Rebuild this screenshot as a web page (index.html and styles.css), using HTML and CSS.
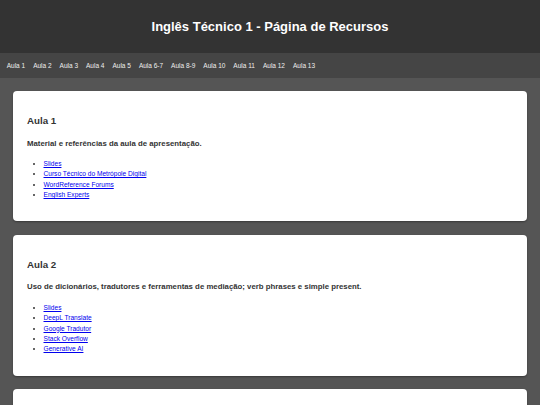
FILE: index.html
```html
<!DOCTYPE html>
<html lang="pt-BR">
<head>
<meta charset="utf-8">
<title>Inglês Técnico 1 - Página de Recursos</title>
<link rel="stylesheet" href="styles.css">
</head>
<body>
<header class="site-header">
  <h1 class="site-title">Inglês Técnico 1 - Página de Recursos</h1>
</header>
<nav class="site-nav">
  <a href="#aula1">Aula 1</a>
  <a href="#aula2">Aula 2</a>
  <a href="#aula3">Aula 3</a>
  <a href="#aula4">Aula 4</a>
  <a href="#aula5">Aula 5</a>
  <a href="#aula6-7">Aula 6-7</a>
  <a href="#aula8-9">Aula 8-9</a>
  <a href="#aula10">Aula 10</a>
  <a href="#aula11">Aula 11</a>
  <a href="#aula12">Aula 12</a>
  <a href="#aula13">Aula 13</a>
</nav>
<main class="content">
  <section class="card" id="aula1">
    <h2 class="card-title">Aula 1</h2>
    <p class="card-desc">Material e referências da aula de apresentação.</p>
    <ul class="card-links">
      <li><a href="#">Slides</a></li>
      <li><a href="#">Curso Técnico do Metrópole Digital</a></li>
      <li><a href="#">WordReference Forums</a></li>
      <li><a href="#">English Experts</a></li>
    </ul>
  </section>
  <section class="card" id="aula2">
    <h2 class="card-title">Aula 2</h2>
    <p class="card-desc">Uso de dicionários, tradutores e ferramentas de mediação; verb phrases e simple present.</p>
    <ul class="card-links">
      <li><a href="#">Slides</a></li>
      <li><a href="#">DeepL Translate</a></li>
      <li><a href="#">Google Tradutor</a></li>
      <li><a href="#">Stack Overflow</a></li>
      <li><a href="#">Generative AI</a></li>
    </ul>
  </section>
  <section class="card card-next" id="aula3"></section>
</main>
</body>
</html>
```
FILE: styles.css
```css
html, body {
  margin: 0;
  padding: 0;
}
body {
  background: #555555;
  font-family: "Liberation Sans", Arial, sans-serif;
  font-size: 6.5px;
  color: #333333;
}
.site-header {
  background: #333333;
  height: 53px;
  display: flex;
  align-items: center;
  justify-content: center;
}
.site-title {
  margin: 0;
  color: #ffffff;
  font-size: 13px;
  font-weight: bold;
  line-height: 15px;
}
.site-nav {
  background: #454545;
  height: 25px;
  display: flex;
  align-items: center;
  gap: 8px;
  padding: 0 6.7px;
}
.site-nav a {
  color: #eeeeee;
  text-decoration: none;
  font-size: 6.5px;
  line-height: 8px;
}
.content {
  padding: 13px 13.5px 0 13px;
  display: flex;
  flex-direction: column;
  gap: 13.5px;
}
.card {
  background: #ffffff;
  border-radius: 4px;
  box-shadow: 0 1px 2px rgba(0, 0, 0, 0.35);
  padding: 24px 14px 21px 14px;
}
.card-next {
  min-height: 60px;
}
.card-title {
  margin: 0;
  font-size: 9.75px;
  line-height: 12px;
  font-weight: bold;
  color: #333333;
}
.card-desc {
  margin: 11.5px 0 0 0;
  font-size: 7.8px;
  line-height: 10px;
  font-weight: bold;
  color: #333333;
}
.card-links {
  margin: 10.3px 0 0 0;
  padding-left: 16.5px;
  font-size: 6.6px;
  line-height: 10.4px;
}
.card-links a {
  color: #0000ee;
}
```
